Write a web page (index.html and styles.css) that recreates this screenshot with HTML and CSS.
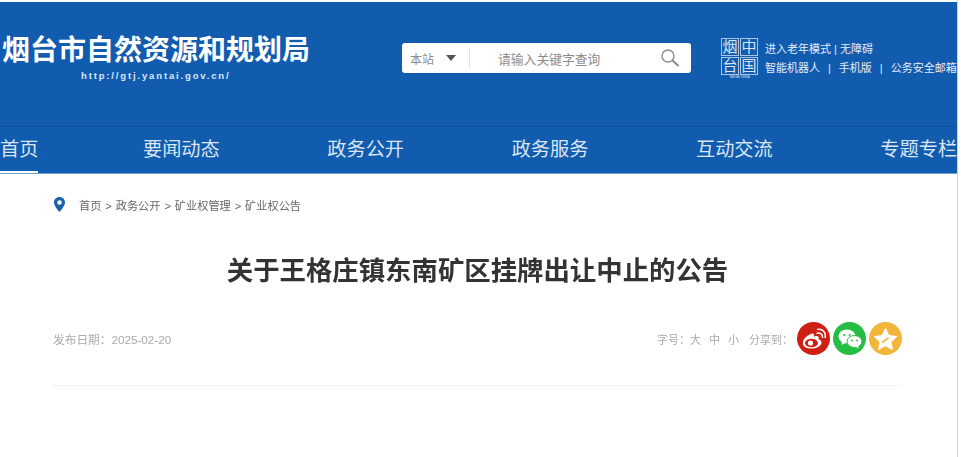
FILE: index.html
```html
<!DOCTYPE html>
<html lang="zh-CN">
<head>
    <meta charset="UTF-8">
    <meta name="viewport" content="width=device-width, initial-scale=1.0">
    <title>关于王格庄镇东南矿区挂牌出让中止的公告</title>
    <link rel="stylesheet" href="styles.css">
</head>
<body>
<div class="page">
    <header class="header">
        <div class="top">
            <div class="brand">
                <div class="brand-name">烟台市自然资源和规划局</div>
                <div class="brand-url">http://gtj.yantai.gov.cn/</div>
            </div>
            <div class="search">
                <span class="search-scope">本站</span>
                <span class="caret"></span>
                <span class="search-line"></span>
                <span class="search-hint">请输入关键字查询</span>
                <svg class="search-icon" width="20" height="20" viewBox="0 0 20 20">
                    <circle cx="8" cy="8" r="6" fill="none" stroke="#8a8a8a" stroke-width="1.4"/>
                    <path d="M12.5 12.5 L18.5 18" stroke="#8a8a8a" stroke-width="2"/>
                </svg>
            </div>
            <div class="seal">
                <div class="seal-grid">
                    <span class="seal-cell">烟</span>
                    <span class="seal-cell">中</span>
                    <span class="seal-cell">台</span>
                    <span class="seal-cell">国</span>
                </div>
                <div class="seal-text">YANTAI CHINA</div>
            </div>
            <div class="links">
                <div>进入老年模式 | 无障碍</div>
                <div class="links-row">智能机器人<i>|</i>手机版<i>|</i>公务安全邮箱</div>
            </div>
        </div>
        <nav class="nav">
            <a class="nav-item active">首页</a>
            <a class="nav-item">要闻动态</a>
            <a class="nav-item">政务公开</a>
            <a class="nav-item">政务服务</a>
            <a class="nav-item">互动交流</a>
            <a class="nav-item">专题专栏</a>
        </nav>
    </header>

    <main class="content">
        <div class="crumbs">
            <svg class="pin" width="11" height="15" viewBox="0 0 11 15">
                <path fill-rule="evenodd" fill="#1b62ad" d="M5.5 0 C2.4 0 0 2.4 0 5.4 C0 9 5.5 15 5.5 15 C5.5 15 11 9 11 5.4 C11 2.4 8.6 0 5.5 0 Z M5.5 3.2 A2.3 2.3 0 1 1 5.5 7.8 A2.3 2.3 0 1 1 5.5 3.2 Z"/>
            </svg>
            <span>首页 &gt; 政务公开 &gt; 矿业权管理 &gt; 矿业权公告</span>
        </div>
        <h1 class="title">关于王格庄镇东南矿区挂牌出让中止的公告</h1>
        <div class="meta">
            <span class="date">发布日期：2025-02-20</span>
            <div class="tools">
                <span>字号：</span>
                <span class="size">大</span>
                <span class="size">中</span>
                <span class="size">小</span>
                <span class="share-label">分享到：</span>
                <div class="share share-weibo">
                    <svg width="25" height="22" viewBox="0 0 25 22">
                        <path fill="#fff" d="M10 6 C5 8 1 12 2 16 C3 20 8 21 12 20.500 C17 20 21 17 20.500 14 C20 12 18 11.500 17.500 11 C18.500 8.500 16.500 7 13 8.500 C13.500 6 12.500 5 10 6 Z"/>
                        <ellipse cx="10.500" cy="15" rx="6.500" ry="4.300" fill="#cf1f12"/>
                        <circle cx="9.500" cy="15" r="2.600" fill="#fff"/>
                        <path d="M15.500 5.500 C18.500 4 22 6 21.500 10 M16 1.500 C21 0 25.500 4 24 10" fill="none" stroke="#fff" stroke-width="1.500"/>
                    </svg>
                </div>
                <div class="share share-wechat">
                    <svg width="24" height="20" viewBox="0 0 24 20">
                        <ellipse cx="9" cy="7.500" rx="8.500" ry="7" fill="#fff"/>
                        <path d="M4 12 L3.500 16 L8 13.500 Z" fill="#fff"/>
                        <ellipse cx="16.500" cy="12.500" rx="7.500" ry="6" fill="#fff" stroke="#26bd44"/>
                        <path d="M20 16.500 L21 19.500 L17 17.500 Z" fill="#fff"/>
                        <circle cx="6.300" cy="6" r="1.100" fill="#26bd44"/>
                        <circle cx="11.700" cy="6" r="1.100" fill="#26bd44"/>
                        <circle cx="14" cy="11.500" r="0.900" fill="#26bd44"/>
                        <circle cx="19" cy="11.500" r="0.900" fill="#26bd44"/>
                    </svg>
                </div>
                <div class="share share-fav">
                    <svg width="25" height="24" viewBox="0 0 25 24">
                        <path fill="#fff" d="M12.500 0.500 L16.200 8 L24.500 9.200 L18.500 15 L20 23.300 L12.500 19.300 L5 23.300 L6.500 15 L0.500 9.200 L8.800 8 Z"/>
                        <path d="M9 15.500 L15.500 11" stroke="#f2b63c" stroke-width="1.600" fill="none"/>
                    </svg>
                </div>
            </div>
        </div>
        <div class="rule"></div>
    </main>
</div>
</body>
</html>
```

FILE: styles.css
```css
html, body {
    margin: 0;
    height: 100%;
    overflow: hidden;
    background: #fff;
}
body {
    font-family: "Liberation Sans", "Noto Sans CJK SC", sans-serif;
}
.page {
    width: 958px;
    height: 457px;
    box-sizing: border-box;
    border-right: 1px solid #d4d4d4;
    overflow: hidden;
    filter: blur(0.7px);
}
.header {
    margin-top: 2px;
    background: #115cae;
    border-bottom: 1px solid #6f9fd2;
}
.top {
    height: 124px;
    display: flex;
    align-items: flex-start;
    border-bottom: 1px solid #0d519c;
}
.brand {
    width: 402px;
    flex: none;
    padding: 33px 0 0 2px;
    box-sizing: border-box;
    color: #fff;
}
.brand-name {
    font-size: 28px;
    line-height: 32px;
    font-weight: 700;
    white-space: nowrap;
}
.brand-url {
    margin: 3px 0 0 79px;
    font-size: 9.5px;
    line-height: 12px;
    font-weight: 700;
    letter-spacing: 1.85px;
    color: #dbe7f4;
    white-space: nowrap;
}
.search {
    width: 289px;
    height: 30px;
    margin-top: 41px;
    flex: none;
    display: flex;
    align-items: center;
    background: #fff;
    border-radius: 3px;
    color: #8b8b8b;
}
.search-scope {
    margin-left: 8px;
    font-size: 12px;
}
.caret {
    margin-left: 12px;
    border-top: 6px solid #555;
    border-left: 5.5px solid transparent;
    border-right: 5.5px solid transparent;
}
.search-line {
    width: 1px;
    height: 20px;
    margin-left: 13px;
    background: #e2e2e2;
}
.search-hint {
    margin-left: 28px;
    font-size: 12.8px;
    white-space: nowrap;
}
.search-icon {
    margin-left: 60px;
}
.seal {
    width: 37px;
    margin: 36px 0 0 30px;
    flex: none;
    color: #d7e4f2;
}
.seal-grid {
    display: grid;
    grid-template-columns: 1fr 1fr;
    grid-template-rows: 18px 18px;
    gap: 1px;
    height: 37px;
}
.seal-cell {
    border: 1px solid #a9c5e2;
    font-size: 15px;
    line-height: 16px;
    text-align: center;
    overflow: hidden;
}
.seal-text {
    font-size: 3px;
    line-height: 4px;
    text-align: center;
    white-space: nowrap;
}
.links {
    margin: 38px 0 0 7px;
    font-size: 11px;
    line-height: 19px;
    color: #e6eef7;
    white-space: nowrap;
}
.links i {
    font-style: normal;
    margin: 0 8px;
}
.nav {
    height: 46px;
    display: flex;
    gap: 107.6px;
    overflow: hidden;
}
.nav-item {
    flex: none;
    font-size: 19.2px;
    line-height: 46px;
    color: #dbe6f2;
    white-space: nowrap;
}
.active {
    border-bottom: 2px solid #fff;
    height: 44px;
    margin-right: -3px;
}
.content {
    padding: 0 55px 0 53px;
}
.crumbs {
    display: flex;
    align-items: center;
    gap: 14px;
    margin: 23px 0 0 1px;
    height: 15px;
    font-size: 11.2px;
    word-spacing: 0.8px;
    color: #666;
    white-space: nowrap;
}
.pin {
    flex: none;
}
.title {
    margin: 40px 0 0;
    font-size: 26.4px;
    line-height: 38px;
    font-weight: 700;
    text-align: center;
    color: #333;
}
.meta {
    display: flex;
    justify-content: space-between;
    align-items: center;
    margin-top: 32px;
    font-size: 11px;
    color: #aaa;
}
.date {
    font-size: 11.7px;
}
.tools {
    display: flex;
    align-items: center;
}
.size {
    margin-right: 8px;
}
.share-label {
    margin: 0 1px 0 2px;
}
.share {
    width: 33px;
    height: 33px;
    margin-left: 3px;
    border-radius: 50%;
    display: flex;
    align-items: center;
    justify-content: center;
}
.share-weibo {
    background: #cf1f12;
}
.share-wechat {
    background: #26bd44;
}
.share-fav {
    background: #f2b63c;
}
.rule {
    margin-top: 30px;
    margin-right: 2px;
    border-top: 1px dotted #eaeaea;
}
```
